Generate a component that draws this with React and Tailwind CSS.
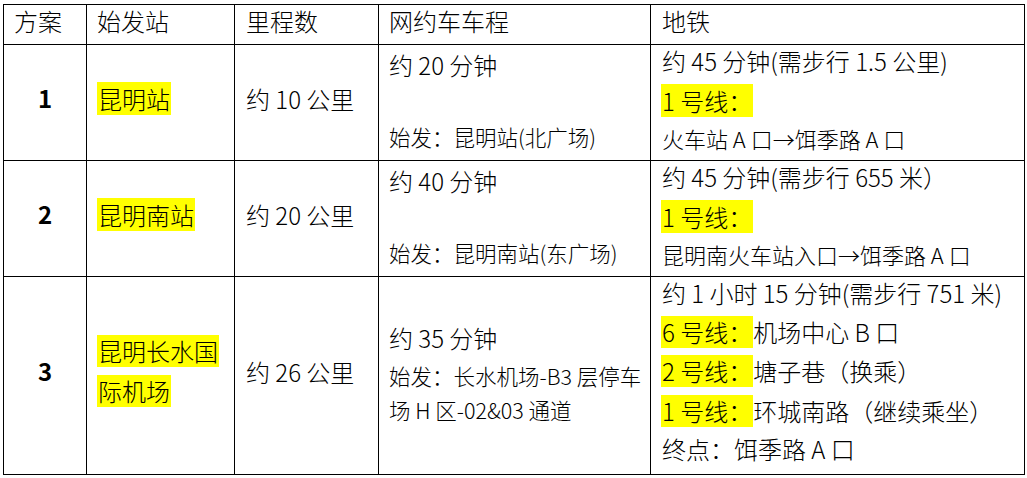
export default function App() {
  const cell = "bg-white";
  const hl = "inline-block bg-[#ffff00] -ml-px px-px";
  return (
    <div className="bg-white w-[1027px] h-[478px] pt-[4px] pl-[3px] text-black font-light font-['Noto_Sans_CJK_SC',sans-serif]">
      <div className="grid w-fit grid-cols-[82px_147px_143px_271px_373px] grid-rows-[39px_115px_115px_197px] gap-px bg-black p-px">
        {/* header */}
        <div className={`${cell} pl-[10px] text-[24px] leading-[31px]`}>方案</div>
        <div className={`${cell} pl-[10px] text-[24px] leading-[31px]`}>始发站</div>
        <div className={`${cell} pl-[11px] text-[24px] leading-[31px]`}>里程数</div>
        <div className={`${cell} pl-[10px] text-[24px] leading-[31px]`}>网约车车程</div>
        <div className={`${cell} pl-[11px] text-[24px] leading-[31px]`}>地铁</div>

        {/* row 1 */}
        <div className={`${cell} flex items-center justify-center pb-[11px] text-[24px] font-bold leading-[31px]`}>1</div>
        <div className={`${cell} flex items-center pl-[10px] pb-[8px]`}>
          <span className="bg-[#ffff00] px-px text-[24px] leading-[33px]">昆明站</span>
        </div>
        <div className={`${cell} flex items-center pl-[11px] pb-[9px] text-[24px] leading-[31px] whitespace-nowrap`}>约 10 公里</div>
        <div className={`${cell} pl-[10px] pt-[4px] whitespace-nowrap`}>
          <div className="text-[24px] leading-[31px]">约 20 分钟</div>
          <div className="mt-[41px] text-[21.5px] leading-[31px]">始发：昆明站(北广场)</div>
        </div>
        <div className={`${cell} pl-[11px] whitespace-nowrap`}>
          <div className="text-[24px] leading-[31px]">约 45 分钟(需步行 1.5 公里)</div>
          <div className="mt-[8px] h-[33px] text-[24px] leading-[33px]">
            <span className={hl}>1 号线：</span>
          </div>
          <div className="mt-[6px] text-[22px] leading-[31px]">火车站 A 口→饵季路 A 口</div>
        </div>

        {/* row 2 */}
        <div className={`${cell} flex items-center justify-center pb-[11px] text-[24px] font-bold leading-[31px]`}>2</div>
        <div className={`${cell} flex items-center pl-[10px] pb-[8px]`}>
          <span className="bg-[#ffff00] px-px text-[24px] leading-[33px]">昆明南站</span>
        </div>
        <div className={`${cell} flex items-center pl-[11px] pb-[9px] text-[24px] leading-[31px] whitespace-nowrap`}>约 20 公里</div>
        <div className={`${cell} pl-[10px] pt-[4px] whitespace-nowrap`}>
          <div className="text-[24px] leading-[31px]">约 40 分钟</div>
          <div className="mt-[41px] text-[21.5px] leading-[31px]">始发：昆明南站(东广场)</div>
        </div>
        <div className={`${cell} pl-[11px] whitespace-nowrap`}>
          <div className="text-[24px] leading-[31px]">约 45 分钟(需步行 655 米）</div>
          <div className="mt-[8px] h-[33px] text-[24px] leading-[33px]">
            <span className={hl}>1 号线：</span>
          </div>
          <div className="mt-[6px] text-[22px] leading-[31px]">昆明南火车站入口→饵季路 A 口</div>
        </div>

        {/* row 3 */}
        <div className={`${cell} flex items-center justify-center pb-[11px] text-[24px] font-bold leading-[31px]`}>3</div>
        <div className={`${cell} flex flex-col items-start justify-center gap-[8px] pl-[10px] pb-[9px]`}>
          <span className="block bg-[#ffff00] px-px text-[24px] leading-[32px] h-[32px]">昆明长水国</span>
          <span className="block bg-[#ffff00] px-px text-[24px] leading-[32px] h-[32px]">际机场</span>
        </div>
        <div className={`${cell} flex items-center pl-[11px] pb-[9px] text-[24px] leading-[31px] whitespace-nowrap`}>约 26 公里</div>
        <div className={`${cell} pl-[10px] pt-[45px] whitespace-nowrap`}>
          <div className="text-[24px] leading-[31px]">约 35 分钟</div>
          <div className="mt-[7px] text-[21.5px] leading-[31px]">始发：长水机场-B3 层停车</div>
          <div className="mt-[3px] text-[21.5px] leading-[31px]">场 H 区-02&amp;03 通道</div>
        </div>
        <div className={`${cell} pl-[11px] whitespace-nowrap`}>
          <div className="text-[24px] leading-[31px]">约 1 小时 15 分钟(需步行 751 米)</div>
          <div className="mt-[8px] h-[32px] text-[24px] leading-[32px]">
            <span className={hl}>6 号线：</span>机场中心 B 口
          </div>
          <div className="mt-[7px] h-[32px] text-[24px] leading-[32px]">
            <span className={hl}>2 号线：</span>塘子巷（换乘）
          </div>
          <div className="mt-[8px] h-[32px] text-[24px] leading-[32px]">
            <span className={hl}>1 号线：</span>环城南路（继续乘坐）
          </div>
          <div className="mt-[6px] text-[24px] leading-[31px]">终点：饵季路 A 口</div>
        </div>
      </div>
    </div>
  );
}
